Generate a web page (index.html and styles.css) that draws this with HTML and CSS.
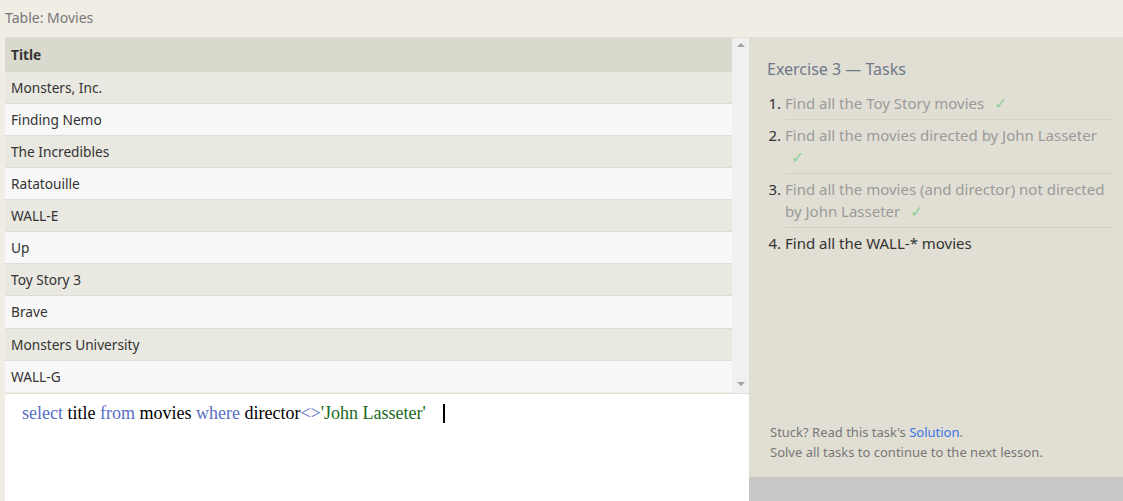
FILE: index.html
```html
<!DOCTYPE html>
<html>
<head>
<meta charset="utf-8">
<link rel="stylesheet" href="styles.css">
</head>
<body>
<div class="page-title">Table: Movies</div>
<div class="main">
  <div class="left">
    <div class="table-wrap">
      <div class="table">
        <div class="th">Title</div>
        <div class="row odd">Monsters, Inc.</div>
        <div class="row even">Finding Nemo</div>
        <div class="row odd">The Incredibles</div>
        <div class="row even">Ratatouille</div>
        <div class="row odd">WALL-E</div>
        <div class="row even">Up</div>
        <div class="row odd">Toy Story 3</div>
        <div class="row even">Brave</div>
        <div class="row odd">Monsters University</div>
        <div class="row even">WALL-G</div>
      </div>
      <div class="scrollbar">
        <span class="arrow up"></span>
        <span class="arrow down"></span>
      </div>
    </div>
    <div class="editor">
      <div class="code"><span class="kw">select</span> title <span class="kw">from</span> movies <span class="kw">where</span> director<span class="op">&lt;&gt;</span><span class="str">'John Lasseter'</span><span class="cursor"></span></div>
    </div>
  </div>
  <div class="right">
    <div class="tasks">
      <h2 class="tasks-title">Exercise 3 — Tasks</h2>
      <ol class="task-list">
        <li class="done">Find all the Toy Story movies <span class="check">✓</span></li>
        <li class="done">Find all the movies directed by John Lasseter <span class="check">✓</span></li>
        <li class="done">Find all the movies (and director) not directed by John Lasseter <span class="check">✓</span></li>
        <li class="current">Find all the WALL-* movies</li>
      </ol>
      <div class="help">
        <div>Stuck? Read this task's <span class="link">Solution</span>.</div>
        <div>Solve all tasks to continue to the next lesson.</div>
      </div>
    </div>
    <div class="footer-bar"></div>
  </div>
</div>
</body>
</html>
```

FILE: styles.css
```css
html, body {
  margin: 0;
  padding: 0;
}
body {
  background: #f0ede5;
  font-family: "Noto Sans", "Open Sans", sans-serif;
  font-size: 14px;
  color: #333;
  width: 1123px;
  height: 501px;
  overflow: hidden;
}
.page-title {
  height: 37px;
  line-height: 35px;
  padding-left: 5px;
  color: #777;
  font-size: 14px;
}
.main {
  display: flex;
  height: 464px;
}
.left {
  margin-left: 5px;
  width: 744px;
  display: flex;
  flex-direction: column;
}
.table-wrap {
  display: flex;
  border-top: 1px solid #e2e0d8;
  height: 355px;
  border-bottom: 1px solid #e2e0d8;
}
.table {
  flex: 1;
  font-size: 13.7px;
}
.th {
  height: 33.5px;
  line-height: 33px;
  background: #dad9cd;
  font-weight: bold;
  padding-left: 6px;
  color: #333;
}
.row {
  height: 31.15px;
  line-height: 32px;
  border-bottom: 1px solid #dcdcd8;
  padding-left: 6px;
  color: #333;
}
.row:last-child {
  border-bottom: none;
}
.odd {
  background: #e9e8e1;
}
.even {
  background: #f8f8f8;
}
.scrollbar {
  width: 17px;
  background: #f0f0f0;
  display: flex;
  flex-direction: column;
  justify-content: space-between;
  align-items: center;
  padding: 5px 0 7px;
  box-sizing: border-box;
}
.arrow {
  width: 0;
  height: 0;
  border-left: 4px solid transparent;
  border-right: 4px solid transparent;
}
.arrow.up {
  border-bottom: 4px solid #a3a3a3;
}
.arrow.down {
  border-top: 4px solid #a3a3a3;
}
.editor {
  flex: 1;
  background: #fff;
  padding: 8px 0 0 17px;
}
.code {
  font-family: "Liberation Serif", "DejaVu Serif", serif;
  font-size: 18px;
  color: #000;
  display: flex;
  align-items: center;
  white-space: pre;
  height: 22px;
}
.kw, .op {
  color: #5a6ec4;
}
.str {
  color: #1a6b1a;
}
.cursor {
  display: inline-block;
  width: 2px;
  height: 19px;
  background: #000;
  margin-left: 17px;
}
.right {
  width: 374px;
  display: flex;
  flex-direction: column;
}
.tasks {
  flex: 1;
  background: #e1dfd4;
  padding: 21px 10px 0 18px;
  display: flex;
  flex-direction: column;
}
.tasks-title {
  margin: 0 0 8px;
  font-weight: normal;
  font-size: 16px;
  color: #6f7889;
  line-height: 22px;
}
.task-list {
  margin: 0;
  padding-left: 18px;
}
.task-list li {
  padding: 4px 0 5px;
  line-height: 22px;
  border-bottom: 1px solid #d3d1c6;
  color: #9a9a9a;
  font-size: 15px;
}
.task-list li::marker {
  color: #333;
}
.task-list li.current {
  color: #333;
  border-bottom: none;
}
.check {
  color: #90d09e;
  margin-left: 6px;
  font-size: 16px;
  line-height: 20px;
}
.help {
  margin-top: auto;
  margin-bottom: 15px;
  padding-left: 3px;
  font-size: 13px;
  color: #777;
  line-height: 20px;
}
.link {
  color: #3d74e6;
}
.footer-bar {
  height: 24px;
  background: #c8c8c8;
}
```
